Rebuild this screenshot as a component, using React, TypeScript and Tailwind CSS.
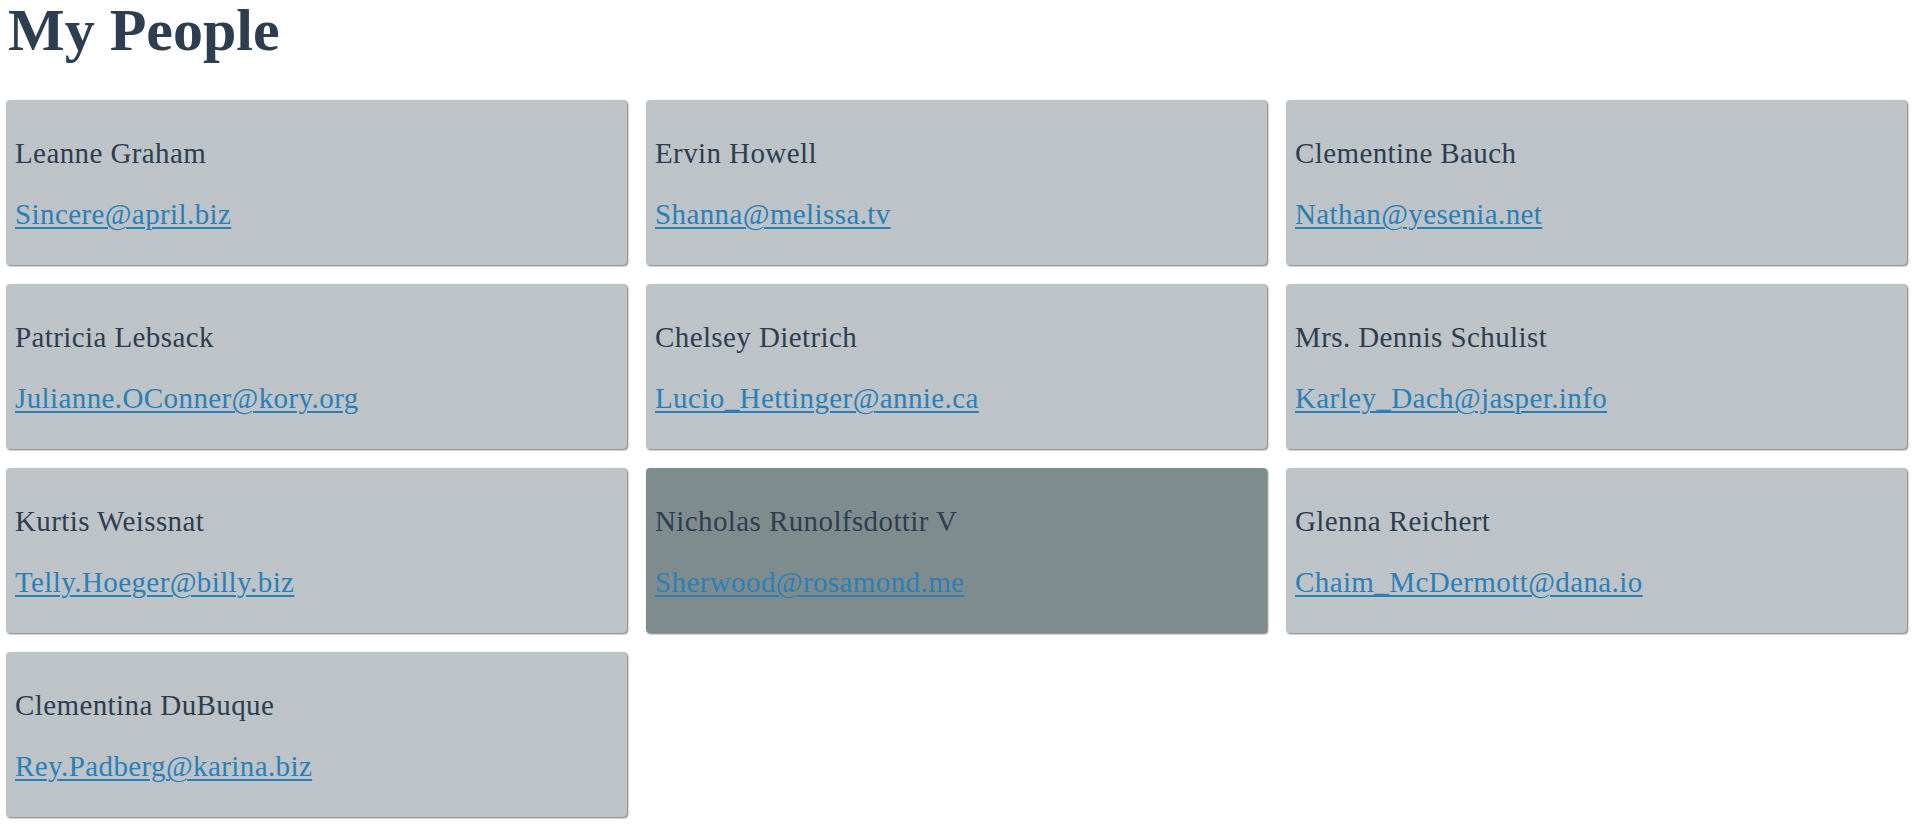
import React from 'react';

const people = [
  { name: 'Leanne Graham', email: 'Sincere@april.biz' },
  { name: 'Ervin Howell', email: 'Shanna@melissa.tv' },
  { name: 'Clementine Bauch', email: 'Nathan@yesenia.net' },
  { name: 'Patricia Lebsack', email: 'Julianne.OConner@kory.org' },
  { name: 'Chelsey Dietrich', email: 'Lucio_Hettinger@annie.ca' },
  { name: 'Mrs. Dennis Schulist', email: 'Karley_Dach@jasper.info' },
  { name: 'Kurtis Weissnat', email: 'Telly.Hoeger@billy.biz' },
  { name: 'Nicholas Runolfsdottir V', email: 'Sherwood@rosamond.me' },
  { name: 'Glenna Reichert', email: 'Chaim_McDermott@dana.io' },
  { name: 'Clementina DuBuque', email: 'Rey.Padberg@karina.biz' },
];

// the 8th card is shown in its hovered state
const activeIndex = 7;

export default function App() {
  return (
    <div className="min-h-screen bg-white font-['Liberation_Serif',serif] text-[#2c3e50]">
      <h1 className="pl-[8px] text-[60px] leading-[60px] font-bold">My People</h1>

      <div className="mt-[40px] grid grid-cols-3 gap-[19px] pl-[6px] pr-[8px] pb-[16px]">
        {people.map((person, index) => (
          <div
            key={person.email}
            className={`flex h-[165px] flex-col rounded-[4px] pl-[9px] pt-[36px] shadow-[1px_1px_2px_rgba(0,0,0,0.55)] ${
              index === activeIndex ? 'bg-[#7f8c8d]' : 'bg-[#bdc3c7]'
            }`}
          >
            <p className="text-[29px] leading-[34px] tracking-[0.4px] text-[#2c3e50]">{person.name}</p>
            <a
              href="#"
              className="mt-[27px] self-start text-[29px] leading-[34px] tracking-[0.4px] text-[#2980b9] underline decoration-[1.5px] underline-offset-[3px]"
            >
              {person.email}
            </a>
          </div>
        ))}
      </div>
    </div>
  );
}
